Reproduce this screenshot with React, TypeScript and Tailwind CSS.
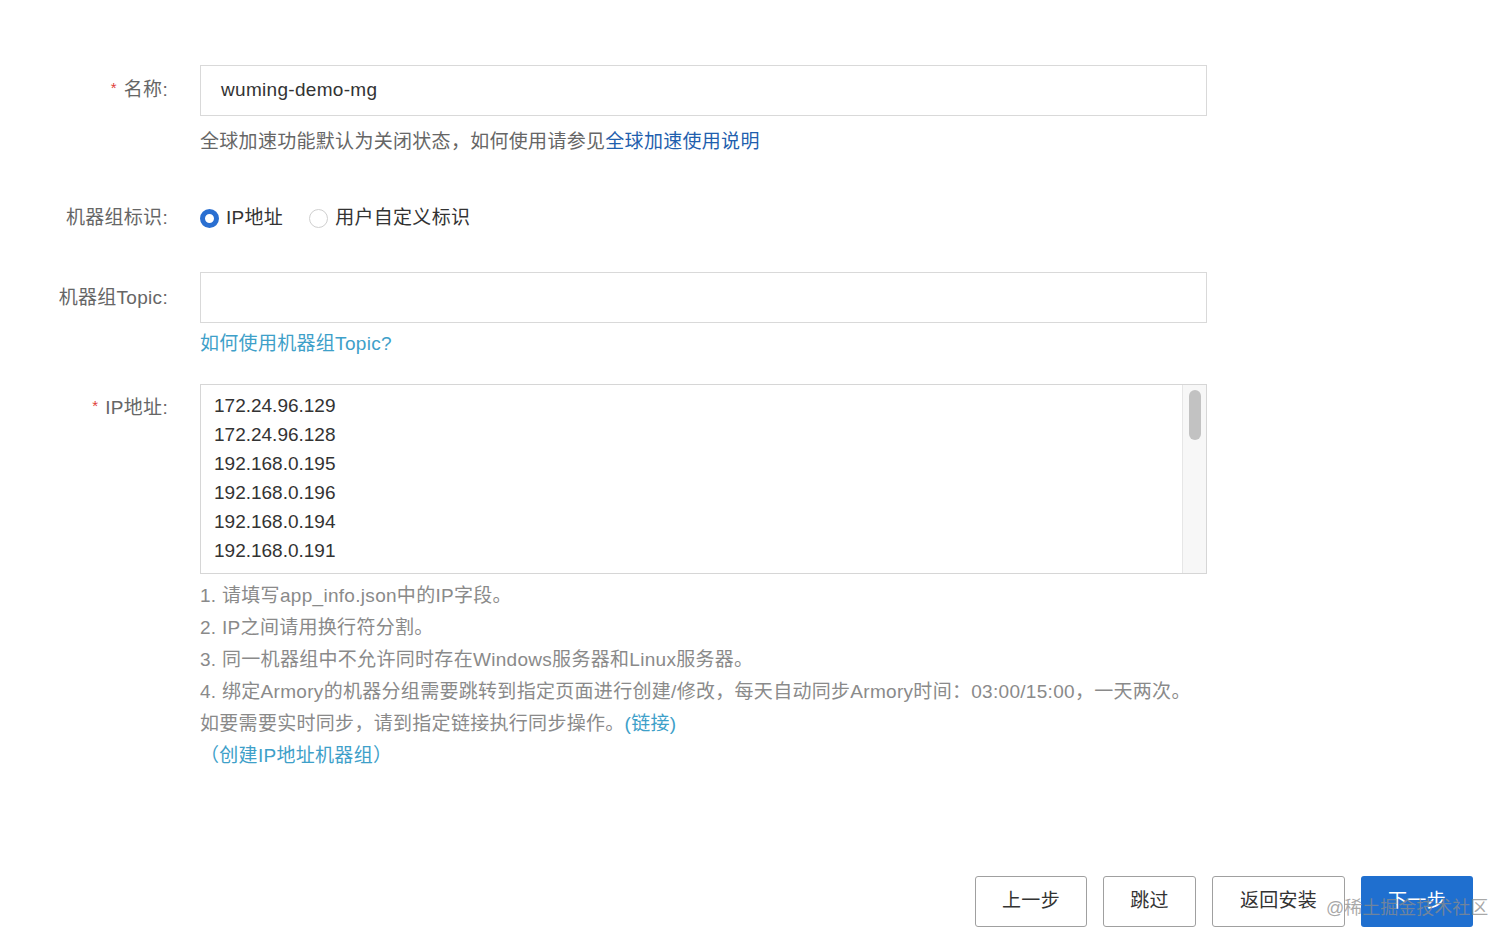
import React from "react";

const font = { fontFamily: '"Liberation Sans", "Noto Sans CJK SC", sans-serif' };

function Label({ text, required }: { text: string; required?: boolean }) {
  return (
    <div className="w-[170px] shrink-0 text-right text-[19px] text-[#666] leading-[28px] pr-[2px]">
      {required && <span className="text-[#e0403a] text-[15px] mr-[7px] relative top-[-3px]">*</span>}
      {text}
    </div>
  );
}

const ips = [
  "172.24.96.129",
  "172.24.96.128",
  "192.168.0.195",
  "192.168.0.196",
  "192.168.0.194",
  "192.168.0.191",
];

export default function App() {
  return (
    <div className="relative w-[1512px] h-[945px] bg-white overflow-hidden tracking-[0.3px]" style={font}>
      <div className="pt-[65px]">
        {/* 名称 */}
        <div className="flex items-center">
          <Label text="名称:" required />
          <div className="ml-[30px] w-[1007px] h-[51px] border border-[#d9d9d9] flex items-center pl-[20px] text-[19px] text-[#333]">
            wuming-demo-mg
          </div>
        </div>
        <div className="ml-[200px] mt-[12px] text-[19px] leading-[28px] text-[#666]">
          全球加速功能默认为关闭状态，如何使用请参见<span className="text-[#1f5fae]">全球加速使用说明</span>
        </div>

        {/* 机器组标识 */}
        <div className="flex items-center mt-[48px]">
          <Label text="机器组标识:" />
          <div className="ml-[30px] flex items-center text-[19px] text-[#333] leading-[28px]">
            <span className="w-[19px] h-[19px] rounded-full border-[5px] border-[#2a6fd1] bg-white box-border" />
            <span className="ml-[7px]">IP地址</span>
            <span className="ml-[26px] w-[19px] h-[19px] rounded-full border border-[#cfcfcf] bg-white box-border" />
            <span className="ml-[7px]">用户自定义标识</span>
          </div>
        </div>

        {/* 机器组Topic */}
        <div className="flex items-center mt-[40px]">
          <Label text="机器组Topic:" />
          <div className="ml-[30px] w-[1007px] h-[51px] border border-[#d9d9d9]" />
        </div>
        <div className="ml-[200px] mt-[7px] text-[19px] leading-[28px] text-[#3ea0c9]">如何使用机器组Topic?</div>

        {/* IP地址 */}
        <div className="flex items-start mt-[26px]">
          <div className="pt-[10px]">
            <Label text="IP地址:" required />
          </div>
          <div className="ml-[30px] w-[1007px] h-[190px] border border-[#d6d6d6] flex overflow-hidden">
            <div className="flex-1 pl-[13px] pt-[6px] text-[19px] leading-[29px] text-[#333] overflow-hidden tracking-normal">
              {ips.map((ip) => (
                <div key={ip}>{ip}</div>
              ))}
            </div>
            <div className="w-[24px] h-full bg-[#f7f7f7] border-l border-[#e6e6e6] flex justify-center pt-[5px]">
              <div className="w-[12px] h-[50px] rounded-full bg-[#c2c2c2]" />
            </div>
          </div>
        </div>
        <div className="ml-[200px] mt-[6px] text-[19px] leading-[32px] text-[#8a8a8a]">
          <div>1. 请填写app_info.json中的IP字段。</div>
          <div>2. IP之间请用换行符分割。</div>
          <div>3. 同一机器组中不允许同时存在Windows服务器和Linux服务器。</div>
          <div>4. 绑定Armory的机器分组需要跳转到指定页面进行创建/修改，每天自动同步Armory时间：03:00/15:00，一天两次。</div>
          <div>
            如要需要实时同步，请到指定链接执行同步操作。<span className="text-[#3ea0c9]">(链接)</span>
          </div>
          <div className="text-[#3ea0c9]">（创建IP地址机器组）</div>
        </div>

        {/* Buttons */}
        <div className="flex justify-end pr-[39px] mt-[104px] gap-[16px]">
          <button className="w-[112px] h-[51px] border border-[#a0a0a0] rounded-[3px] bg-white text-[19px] text-[#333]">上一步</button>
          <button className="w-[93px] h-[51px] border border-[#a0a0a0] rounded-[3px] bg-white text-[19px] text-[#333]">跳过</button>
          <button className="w-[133px] h-[51px] border border-[#a0a0a0] rounded-[3px] bg-white text-[19px] text-[#333]">返回安装</button>
          <button className="w-[112px] h-[51px] rounded-[3px] bg-[#1f6fcf] text-[19px] text-white">下一步</button>
        </div>
      </div>
      <div className="absolute left-[1326px] top-[896px] text-[18px] leading-[24px] tracking-normal text-[rgba(140,140,140,0.75)] pointer-events-none">
        @稀土掘金技术社区
      </div>
    </div>
  );
}
